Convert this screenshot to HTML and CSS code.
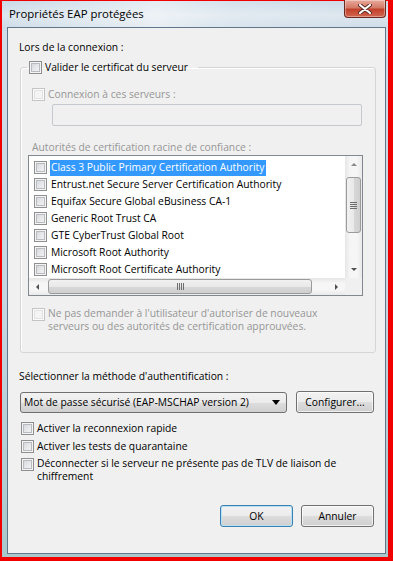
FILE: index.html
```html
<!DOCTYPE html>
<html lang="fr">
<head>
  <meta charset="UTF-8" />
  <meta name="viewport" content="width=device-width, initial-scale=1.0"/>
  <title>Propriétés EAP protégées</title>
  <link rel="stylesheet" href="styles.css">
</head>
<body>

  <div class="window">
    <div class="titlebar">
      <span class="title">Propriétés EAP protégées</span>
      <div class="close-btn">
        <svg width="14" height="10" viewBox="0 0 14 10">
          <path d="M2 1 L12 9 M12 1 L2 9" stroke="#5a2a22" stroke-width="4" stroke-linecap="round"/>
          <path d="M2 1 L12 9 M12 1 L2 9" stroke="#fff" stroke-width="2.2" stroke-linecap="round"/>
        </svg>
      </div>
    </div>

    <div class="client">
      <div class="label intro">Lors de la connexion :</div>

      <fieldset class="group">
        <legend class="check"><span class="cb"></span>Valider le certificat du serveur</legend>

        <div class="check disabled servers"><span class="cb"></span>Connexion à ces serveurs :</div>
        <div class="textbox"></div>

        <div class="label disabled ca-label">Autorités de certification racine de confiance :</div>
        <div class="listbox">
          <ul class="items">
            <li><span class="cb"></span><span class="selected">Class 3 Public Primary Certification Authority</span></li>
            <li><span class="cb"></span><span>Entrust.net Secure Server Certification Authority</span></li>
            <li><span class="cb"></span><span>Equifax Secure Global eBusiness CA-1</span></li>
            <li><span class="cb"></span><span>Generic Root Trust CA</span></li>
            <li><span class="cb"></span><span>GTE CyberTrust Global Root</span></li>
            <li><span class="cb"></span><span>Microsoft Root Authority</span></li>
            <li><span class="cb"></span><span>Microsoft Root Certificate Authority</span></li>
          </ul>
          <div class="vscroll">
            <div class="arrow-btn"><span class="tri up"></span></div>
            <div class="track"><div class="thumb"><span class="grip"></span></div></div>
            <div class="arrow-btn"><span class="tri down"></span></div>
          </div>
          <div class="hscroll">
            <div class="arrow-btn"><span class="tri left"></span></div>
            <div class="track"><div class="thumb"><span class="grip"></span></div></div>
            <div class="arrow-btn"><span class="tri right"></span></div>
          </div>
          <div class="corner"></div>
        </div>

        <div class="check disabled multi ask"><span class="cb"></span><span>Ne pas demander à l'utilisateur d'autoriser de nouveaux<br>serveurs ou des autorités de certification approuvées.</span></div>
      </fieldset>

      <div class="label method-label">Sélectionner la méthode d'authentification :</div>
      <div class="method-row">
        <div class="combo">Mot de passe sécurisé (EAP-MSCHAP version 2)<span class="combo-arrow"></span></div>
        <button class="btn configure">Configurer...</button>
      </div>

      <div class="check option"><span class="cb"></span>Activer la reconnexion rapide</div>
      <div class="check option"><span class="cb"></span>Activer les tests de quarantaine</div>
      <div class="check option multi"><span class="cb"></span><span>Déconnecter si le serveur ne présente pas de TLV de liaison de<br>chiffrement</span></div>

      <div class="actions">
        <button class="btn default">OK</button>
        <button class="btn">Annuler</button>
      </div>
    </div>
  </div>

</body>
</html>
```

FILE: styles.css
```css
body {
  margin: 0;
  height: 561px;
  overflow: hidden;
  background: #f20000;
  font-family: "Open Sans", "Noto Sans", sans-serif;
  font-size: 10.3px;
  color: #000;
}

.window {
  margin: 1px 5px 4px 2px;
  height: 556px;
  display: flex;
  flex-direction: column;
  background: linear-gradient(180deg, #c9d9e6 0, #dce6ee 14px, #cfdde8 26px, #c6d6e1 300px, #a9c8cc 100%);
}

/* title bar */
.titlebar {
  height: 26px;
  display: flex;
  align-items: flex-start;
  padding: 0 2px 0 7px;
  background: linear-gradient(90deg, rgba(255,255,255,0) 0, rgba(255,255,255,0.5) 40%, rgba(255,255,255,0.2) 60%, rgba(255,255,255,0) 100%);
}

.title {
  font-size: 11.4px;
  line-height: 25px;
  color: #000;
}

.close-btn {
  margin-left: auto;
  margin-top: -1px;
  width: 42px;
  height: 18px;
  box-sizing: border-box;
  border: 1px solid #6b2a20;
  border-top: none;
  border-radius: 0 0 4px 4px;
  background: linear-gradient(180deg, #e9a99b 0, #d47b68 45%, #c2412b 55%, #d2664f 100%);
  box-shadow: inset 0 0 0 1px rgba(255,255,255,0.35);
  display: flex;
  align-items: center;
  justify-content: center;
}

/* client area */
.client {
  flex: 1;
  margin: 0 2px 3px 5px;
  border: 1px solid #62768a;
  background: #f0f0f0;
  display: flex;
  flex-direction: column;
}

.label {
  line-height: 16px;
  white-space: nowrap;
}

.disabled {
  color: #969696;
}

.intro {
  margin: 11px 0 0 11px;
}

/* checkbox */
.check {
  display: flex;
  align-items: center;
  line-height: 16px;
  white-space: nowrap;
}

.check.multi {
  align-items: flex-start;
  line-height: 13px;
}

.check.multi .cb {
  margin-top: 1px;
}

.cb {
  flex: none;
  width: 13px;
  height: 13px;
  box-sizing: border-box;
  margin-right: 3px;
  border: 1px solid #8f8f8f;
  background: linear-gradient(135deg, #cdd1d6 0, #e6e7e9 50%, #f6f6f6 100%);
  box-shadow: inset 0 0 0 1px #f4f4f4, inset 0 0 0 2px #b8bcc1;
}

.disabled .cb {
  border-color: #c4c4c4;
  background: #f4f4f4;
  box-shadow: inset 0 0 0 1px #fbfbfb, inset 0 0 0 2px #e2e2e2;
}

/* group box */
.group {
  margin: 4px 9px 0 12px;
  padding: 0 0 19px 0;
  border: 1px solid #d5d5d5;
  border-radius: 3px;
  box-shadow: inset 1px 1px 0 #fff;
}

.group legend {
  margin-left: 6px;
  padding: 0 10px 0 2px;
}

.servers {
  margin: 11px 0 0 11px;
}

.textbox {
  margin: 2px 0 0 31px;
  width: 310px;
  height: 22px;
  box-sizing: border-box;
  border: 1px solid #c5c9cd;
  border-radius: 2px;
  background: #f0f0f0;
}

.ca-label {
  margin: 13px 0 0 11px;
}

/* list box */
.listbox {
  margin: 0 0 0 7px;
  width: 335px;
  height: 141px;
  box-sizing: border-box;
  border: 1px solid #828790;
  background: #fff;
  display: grid;
  grid-template-columns: 1fr 17px;
  grid-template-rows: 1fr 17px;
}

.items {
  margin: 0;
  padding: 3px 0 0 5px;
  list-style: none;
  overflow: hidden;
}

.items li {
  display: flex;
  align-items: center;
  height: 17px;
  white-space: nowrap;
}

.items li span:last-child {
  padding: 0 2px 1px 1px;
  line-height: 15px;
}

.items .selected {
  background: #3399ff;
  color: #fff;
}

.vscroll, .hscroll {
  display: flex;
  background: linear-gradient(90deg, #e6e6e6 0, #f6f6f6 30%, #f6f6f6 70%, #e9e9e9 100%);
}

.vscroll {
  flex-direction: column;
}

.hscroll {
  background: linear-gradient(180deg, #e6e6e6 0, #f6f6f6 30%, #f6f6f6 70%, #e9e9e9 100%);
}

.arrow-btn {
  flex: none;
  width: 17px;
  height: 17px;
  display: flex;
  align-items: center;
  justify-content: center;
}

.track {
  flex: 1;
  display: flex;
}

.vscroll .track {
  flex-direction: column;
}

.thumb {
  box-sizing: border-box;
  border: 1px solid #9b9b9b;
  border-radius: 3px;
  display: flex;
  align-items: center;
  justify-content: center;
}

.vscroll .thumb {
  margin: 4px 1px 0 1px;
  height: 56px;
  background: linear-gradient(90deg, #f1f1f1 0, #e9e9e9 50%, #d8d8d8 51%, #cfcfcf 100%);
}

.hscroll .thumb {
  margin: 1px 0 1px 2px;
  width: 264px;
  background: linear-gradient(180deg, #f1f1f1 0, #e9e9e9 50%, #d8d8d8 51%, #cfcfcf 100%);
}

.vscroll .grip {
  width: 7px;
  height: 7px;
  background: repeating-linear-gradient(180deg, #6d6d6d 0 1px, transparent 1px 2px);
}

.hscroll .grip {
  width: 7px;
  height: 7px;
  background: repeating-linear-gradient(90deg, #6d6d6d 0 1px, transparent 1px 2px);
}

.tri {
  width: 0;
  height: 0;
  border: 3px solid transparent;
}

.tri.up { border-bottom: 3px solid #8a8a8a; border-top: none; }
.tri.down { border-top: 3px solid #4f4f4f; border-bottom: none; }
.tri.left { border-right: 3px solid #4f4f4f; border-left: none; }
.tri.right { border-left: 3px solid #4f4f4f; border-right: none; }

.corner {
  background: #f0f0f0;
}

.ask {
  margin: 11px 0 0 11px;
}

/* authentication method */
.method-label {
  margin: 15px 0 0 11px;
}

.method-row {
  display: flex;
  align-items: center;
  margin: 7px 11px 0 12px;
  gap: 9px;
}

.combo {
  position: relative;
  width: 267px;
  height: 21px;
  box-sizing: border-box;
  padding-left: 3px;
  line-height: 19px;
  border: 1px solid #707070;
  border-radius: 3px;
  background: linear-gradient(180deg, #f2f2f2 0, #ebebeb 50%, #dddddd 51%, #cfcfcf 100%);
  white-space: nowrap;
}

.combo-arrow {
  position: absolute;
  right: 6px;
  top: 7px;
  border-top: 5px solid #000;
  border-left: 4px solid transparent;
  border-right: 4px solid transparent;
}

.btn {
  font-family: inherit;
  font-size: inherit;
  color: #000;
  height: 22px;
  padding: 0;
  box-sizing: border-box;
  border: 1px solid #707070;
  border-radius: 3px;
  background: linear-gradient(180deg, #f2f2f2 0, #ebebeb 50%, #dddddd 51%, #cfcfcf 100%);
  box-shadow: inset 0 0 0 1px rgba(255,255,255,0.7);
}

.configure {
  width: 78px;
}

.option {
  margin: 2px 0 0 13px;
}

.method-row + .option {
  margin-top: 7px;
}

.option.multi {
  margin-top: 3px;
}

/* dialog buttons */
.actions {
  margin: auto 11px 26px 0;
  display: flex;
  justify-content: flex-end;
  gap: 8px;
}

.actions .btn {
  width: 73px;
  height: 22px;
}

.btn.default {
  border-color: #3c7fb1;
  box-shadow: inset 0 0 0 1px #b6e2f5;
}
```
